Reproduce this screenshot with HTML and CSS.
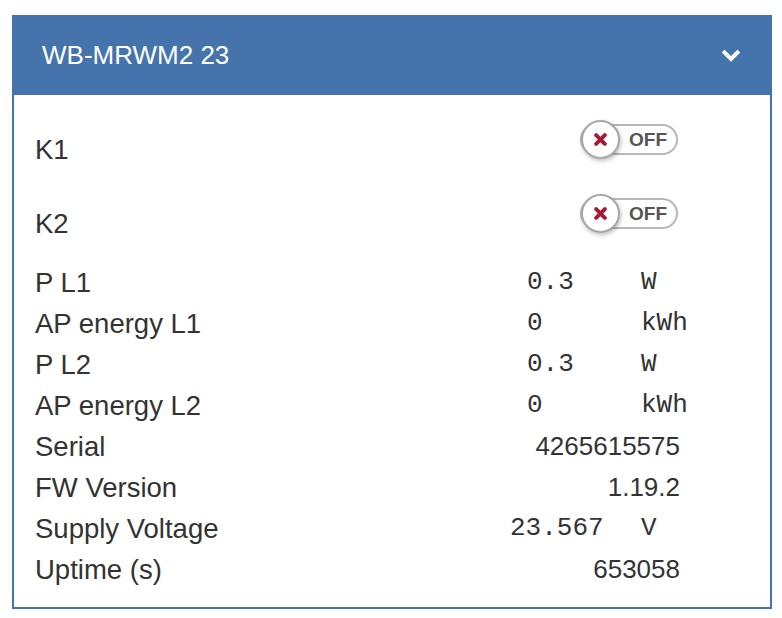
FILE: index.html
```html
<!DOCTYPE html>
<html lang="en">
<head>
    <meta charset="UTF-8">
    <meta name="viewport" content="width=device-width, initial-scale=1.0">
    <title>WB-MRWM2 23</title>
    <link rel="stylesheet" href="styles.css">
</head>
<body>
    <div class="panel">
        <div class="panel-heading">
            <span class="panel-title">WB-MRWM2 23</span>
            <svg class="chevron" xmlns="http://www.w3.org/2000/svg" viewBox="0 0 18 13" width="18" height="13">
                <polyline points="2.5,2.5 9,9 15.5,2.5" fill="none" stroke="#fff" stroke-width="4" stroke-linecap="square"/>
            </svg>
        </div>

        <div class="panel-body">
            <!-- relay switches -->
            <div class="switch-row">
                <span class="label">K1</span>
                <div class="toggle">
                    <span class="knob">
                        <svg viewBox="0 0 12 12" width="13" height="13">
                            <path d="M2 2 L10 10 M10 2 L2 10" stroke="#a11d33" stroke-width="3.6" stroke-linecap="round"/>
                        </svg>
                    </span>
                    <span class="state">OFF</span>
                </div>
            </div>
            <div class="switch-row">
                <span class="label">K2</span>
                <div class="toggle">
                    <span class="knob">
                        <svg viewBox="0 0 12 12" width="13" height="13">
                            <path d="M2 2 L10 10 M10 2 L2 10" stroke="#a11d33" stroke-width="3.6" stroke-linecap="round"/>
                        </svg>
                    </span>
                    <span class="state">OFF</span>
                </div>
            </div>

            <!-- readings -->
            <div class="readings">
                <span class="label">P L1</span>
                <div class="measure"><span class="value">0.3</span><span class="unit">W</span></div>

                <span class="label">AP energy L1</span>
                <div class="measure"><span class="value">0</span><span class="unit">kWh</span></div>

                <span class="label">P L2</span>
                <div class="measure"><span class="value">0.3</span><span class="unit">W</span></div>

                <span class="label">AP energy L2</span>
                <div class="measure"><span class="value">0</span><span class="unit">kWh</span></div>

                <span class="label">Serial</span>
                <span class="text-value">4265615575</span>

                <span class="label">FW Version</span>
                <span class="text-value">1.19.2</span>

                <span class="label">Supply Voltage</span>
                <div class="measure"><span class="value value-wide">23.567</span><span class="unit">V</span></div>

                <span class="label">Uptime (s)</span>
                <span class="text-value">653058</span>
            </div>
        </div>
    </div>
</body>
</html>
```

FILE: styles.css
```css
body {
    margin: 0;
    background-color: #fff;
    color: #333;
    font-family: "Liberation Sans", Arial, sans-serif;
}

.panel {
    width: 760px;
    margin: 15px 0 0 12px;
    border: 2px solid #4474ab;
    border-top: 0;
    box-sizing: border-box;
}

.panel-heading {
    display: flex;
    align-items: center;
    justify-content: space-between;
    height: 80px;
    margin: 0 -2px;
    padding: 0 32px 0 30px;
    background-color: #4474ab;
    color: #fff;
}
.panel-title {
    font-size: 26px;
}
.chevron {
    display: block;
    margin-top: 2px;
}

.panel-body {
    padding: 16px 90px 17px 21px;
}

.label {
    font-size: 27.5px;
    line-height: 41px;
}

/* switch rows */
.switch-row {
    display: flex;
    justify-content: space-between;
    align-items: flex-start;
    height: 74px;
}
.switch-row .label {
    padding-top: 18px;
}
.toggle {
    position: relative;
    display: flex;
    align-items: center;
    justify-content: flex-end;
    width: 98px;
    height: 31px;
    margin-top: 13px;
    margin-right: 2px;
    border: 2px solid #b8b8b8;
    border-radius: 17px;
    box-sizing: border-box;
}
.knob {
    position: absolute;
    left: -1px;
    top: 50%;
    width: 39px;
    height: 39px;
    margin-top: -19.5px;
    display: flex;
    align-items: center;
    justify-content: center;
    background-color: #fff;
    border: 2px solid #a8a8a8;
    border-radius: 50%;
    box-sizing: border-box;
    box-shadow: 1px 2px 4px rgba(0, 0, 0, 0.25);
}
.state {
    padding-right: 9px;
    font-size: 19px;
    font-weight: bold;
    color: #555;
}

/* readings */
.readings {
    display: grid;
    grid-template-columns: 1fr auto;
    margin-top: 3px;
}
.text-value {
    font-size: 26px;
    line-height: 41px;
    text-align: right;
}
.measure {
    display: grid;
    grid-template-columns: 114px 39px;
    font-family: "Liberation Mono", "Courier New", monospace;
    font-size: 26px;
    line-height: 41px;
}
.value-wide {
    margin-left: -17px;
}
.unit {
    white-space: nowrap;
}
```
